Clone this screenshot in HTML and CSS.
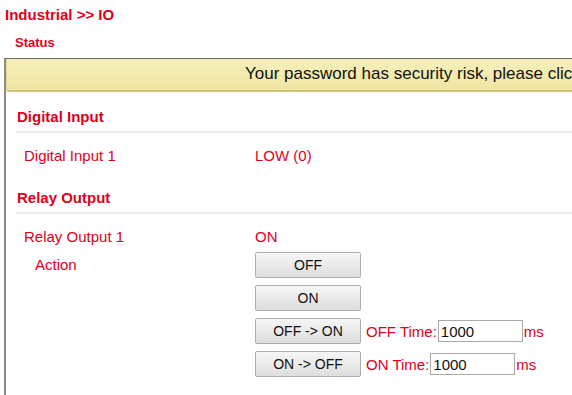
FILE: index.html
```html
<!DOCTYPE html>
<html>
<head>
<meta charset="utf-8">
<link rel="stylesheet" href="styles.css">
</head>
<body>
<div class="title">Industrial &gt;&gt; IO</div>
<div class="status">Status</div>
<div class="panel">
  <div class="banner">Your password has security risk, please click here to change it.</div>
  <div class="section">
    <div class="heading">Digital Input</div>
    <div class="row"><span class="label">Digital Input 1</span><span class="value">LOW (0)</span></div>
  </div>
  <div class="section">
    <div class="heading">Relay Output</div>
    <div class="row"><span class="label">Relay Output 1</span><span class="value">ON</span></div>
    <div class="action">
      <span class="label sub">Action</span>
      <div class="controls">
        <div class="ctrl"><button class="btn">OFF</button></div>
        <div class="ctrl"><button class="btn">ON</button></div>
        <div class="ctrl"><button class="btn">OFF -&gt; ON</button><span class="tlabel">OFF Time:</span><input class="num" type="text" value="1000"><span class="unit">ms</span></div>
        <div class="ctrl"><button class="btn">ON -&gt; OFF</button><span class="tlabel">ON Time:</span><input class="num" type="text" value="1000"><span class="unit">ms</span></div>
      </div>
    </div>
  </div>
</div>
</body>
</html>
```
FILE: styles.css
```css
html, body {
  margin: 0;
  padding: 0;
  background: #fff;
  overflow: hidden;
}
body {
  font-family: "Liberation Sans", Arial, sans-serif;
  color: #e1001b;
  width: 572px;
  height: 395px;
}
.title {
  font-size: 15px;
  font-weight: bold;
  padding: 5px 0 0 5px;
  line-height: 19px;
}
.status {
  font-size: 13px;
  font-weight: bold;
  padding: 11px 0 0 15px;
  line-height: 16px;
}
.panel {
  margin: 7px 0 0 4px;
  border-left: 2px solid #8c8c8c;
  border-top: 1px solid #6e6e6e;
  width: 800px;
  height: 400px;
}
.banner {
  background: linear-gradient(#f7f0bd, #efe5a3);
  border-bottom: 2px solid #cfc57c;
  border-left: 1px solid #e3d88f;
  border-radius: 0 0 3px 3px;
  color: #111;
  font-size: 17px;
  height: 31px;
  line-height: 30px;
  padding-left: 238px;
  white-space: nowrap;
  overflow: hidden;
}
.section {
  padding: 0 0 9px 10px;
}
.heading {
  font-size: 15px;
  font-weight: bold;
  line-height: 18px;
  padding: 16px 0 5px 1px;
  border-bottom: 2px solid #ececec;
}
.row {
  display: flex;
  font-size: 15px;
  line-height: 17px;
  padding: 14px 0 0 8px;
}
.label {
  width: 231px;
}
.action {
  display: flex;
  align-items: flex-start;
  font-size: 15px;
  padding: 7px 0 0 8px;
}
.label.sub {
  padding-left: 11px;
  width: 220px;
  line-height: 26px;
}
.controls {
  display: flex;
  flex-direction: column;
  gap: 7px;
}
.ctrl {
  display: flex;
  align-items: center;
  height: 26px;
}
.btn {
  width: 106px;
  height: 26px;
  font-family: "Liberation Sans", Arial, sans-serif;
  font-size: 14px;
  color: #111;
  background: linear-gradient(#f6f6f6, #dedede);
  border: 1px solid #adadad;
  border-radius: 2px;
  margin: 0;
  padding: 0;
}
.tlabel {
  font-size: 15px;
  margin-left: 5px;
}
.num {
  box-sizing: border-box;
  width: 85px;
  height: 22px;
  border: 1px solid #a9a9a9;
  font-family: "Liberation Sans", Arial, sans-serif;
  font-size: 15px;
  color: #111;
  padding: 1px 2px;
  margin: 0 1px 0 1px;
}
.unit {
  font-size: 15px;
}
```
